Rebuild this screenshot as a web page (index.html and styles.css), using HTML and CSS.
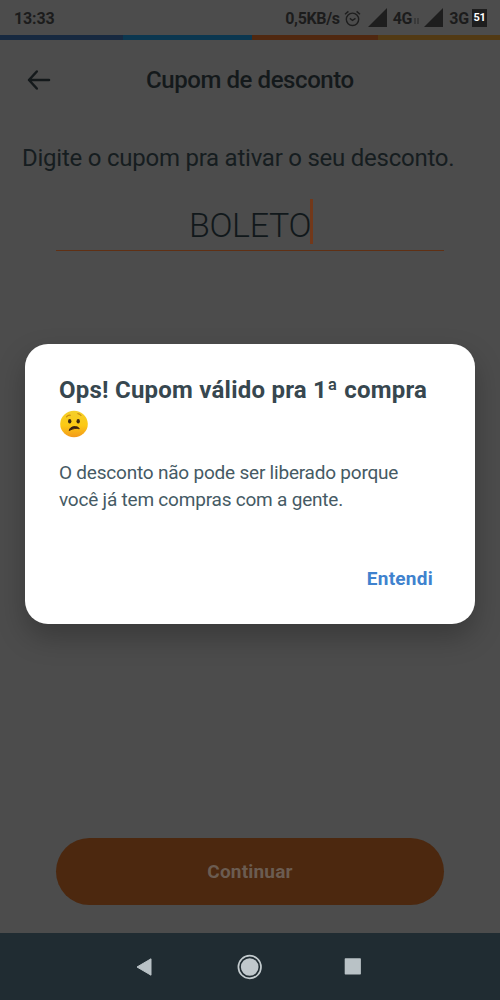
FILE: index.html
```html
<!DOCTYPE html>
<html lang="pt-BR">
<head>
<meta charset="utf-8">
<meta name="viewport" content="width=device-width, initial-scale=1">
<title>Cupom de desconto</title>
<link rel="stylesheet" href="styles.css">
</head>
<body>
<div class="screen">
  <div class="status">
    <span class="clock">13:33</span>
    <span class="speed">0,5KB/s</span>
    <svg class="alarm" width="17" height="17" viewBox="0 0 17 17" fill="none" stroke="#1e1e1e" stroke-width="1.4"><circle cx="8.5" cy="9.3" r="6.2"/><path d="M1 4.3 4.4 1.4M12.6 1.4 16 4.3M5.8 8.4l2.7 2 3-2"/></svg>
    <svg class="signal" width="19" height="19" viewBox="0 0 19 19"><path d="M0 19 19 0v19z" fill="#1e1e1e"/></svg>
    <span class="network">4G</span>
    <svg class="activity" width="6" height="6" viewBox="0 0 6 6"><path d="M1 0v6M4 0v6" stroke="#343434" stroke-width="1.4"/></svg>
    <svg class="signal" width="19" height="19" viewBox="0 0 19 19"><path d="M0 19 19 0v19z" fill="#1e1e1e"/></svg>
    <span class="network last">3G</span>
    <span class="battery">51</span>
  </div>
  <div class="stripe"><i class="navy"></i><i class="blue"></i><i class="orange"></i><i class="gold"></i></div>
  <header class="header">
    <svg class="back" width="24" height="22" viewBox="0 0 24 22" fill="none" stroke="#14191b" stroke-width="2.5" stroke-linecap="round" stroke-linejoin="round"><path d="M22 11H2M9.800 2.500 2 11l7.800 8.500"/></svg>
    <h1>Cupom de desconto</h1>
  </header>
  <main class="content">
    <p class="prompt">Digite o cupom pra ativar o seu desconto.</p>
    <div class="field"><span class="value">BOLETO</span><span class="caret"></span></div>
  </main>
  <div class="continue"><span>Continuar</span></div>
  <nav class="nav">
    <svg width="16" height="18" viewBox="0 0 16 18"><path d="M15 .8v16.400L1 9z" fill="#b9c2c6" stroke="#b9c2c6" stroke-linejoin="round"/></svg>
    <svg width="26" height="26" viewBox="0 0 26 26"><circle cx="12.700" cy="13" r="11.300" fill="none" stroke="#c4cccf" stroke-width="1.700"/><circle cx="12.700" cy="13" r="8.800" fill="#c0c8cc"/></svg>
    <svg width="17" height="17" viewBox="0 0 17 17"><rect x=".7" y=".3" width="16.200" height="16.200" rx=".7" fill="#b9c2c6"/></svg>
  </nav>
  <section class="dialog">
    <h2><span class="title">Ops! Cupom válido pra 1ª compra</span>
      <svg class="emoji" width="28" height="28" viewBox="0 0 28 28">
        <defs><linearGradient id="face" x1="0" y1="0" x2="0" y2="1"><stop offset="0" stop-color="#f5cf2b"/><stop offset=".55" stop-color="#fcc914"/><stop offset="1" stop-color="#f39a1c"/></linearGradient></defs>
        <ellipse cx="14" cy="14" rx="13.800" ry="13.200" fill="url(#face)"/>
        <path d="M6.500 6.800q1.500-1.900 4-1.600M17.800 3.600q2 .2 3.200 1.900" fill="none" stroke="#c98a12" stroke-width="1.100" stroke-linecap="round"/>
        <ellipse cx="9.700" cy="11.200" rx="1.700" ry="2.200" fill="#3a2611"/><ellipse cx="18.200" cy="11.200" rx="1.700" ry="2.200" fill="#3a2611"/>
        <path d="M9.200 20.500c.6-4.500 8.600-5.300 10.100-1.700-2.900-.9-5.900-.4-10.100 1.700z" fill="#3a2010" stroke="#3a2010" stroke-width=".9" stroke-linejoin="round"/>
      </svg>
    </h2>
    <p class="message">O desconto não pode ser liberado porque<br>você já tem compras com a gente.</p>
    <div class="action"><span>Entendi</span></div>
  </section>
</div>
</body>
</html>
```
FILE: styles.css
```css
* { box-sizing: border-box; }
body { margin: 0; font-family: Roboto, "Liberation Sans", sans-serif; }
h1, h2, p { margin: 0; }
svg { display: block; flex: none; }
span { white-space: nowrap; }
.screen { position: relative; width: 500px; height: 1000px; display: flex; flex-direction: column; background: #4c4c4c; overflow: hidden; }

.status { height: 35px; padding: 1px 13px 0 14px; display: flex; align-items: center; color: #1c1c1c; font-size: 16px; font-weight: 700; }
.clock { margin-right: auto; letter-spacing: -.15px; }
.speed { letter-spacing: -.35px; }
.alarm { margin: 0 7px 0 4px; }
.signal { margin-top: -2px; }
.network { margin-left: 6px; letter-spacing: -.2px; }
.activity { margin: 5px 4px 0 2px; }
.last { margin-right: 3px; }
.battery { width: 15px; height: 18px; background: #1e1e1e; color: #fff; font-size: 11px; line-height: 17px; text-align: center; letter-spacing: -.3px; }

.stripe { height: 5px; display: flex; }
.navy { width: 123px; background: #172940; }
.blue { width: 129px; background: #0b3750; }
.orange { width: 126px; background: #502810; }
.gold { flex: 1; background: #523a14; }

.header { height: 80px; display: flex; align-items: center; padding-left: 27px; }
.header h1 { margin-left: 95px; color: #14191b; font-size: 24px; font-weight: 500; line-height: 32px; letter-spacing: -.42px; }
.content { display: flex; flex-direction: column; padding: 20px 22px 0; }
.prompt { height: 36px; line-height: 36px; font-size: 24px; letter-spacing: -.24px; color: #161d20; white-space: nowrap; }
.field { margin: 22px 34px 0; height: 53px; border-bottom: 1px solid #603014; display: flex; justify-content: center; align-items: flex-start; }
.value { margin-left: 2px; font-size: 34px; font-weight: 300; line-height: 55px; letter-spacing: -.35px; color: #11181b; }
.caret { flex: none; margin: 1px 0 0 -1px; width: 3px; height: 45px; background: #72381a; }

.continue { margin: auto 56px 28px; height: 67px; border-radius: 34px; display: flex; align-items: center; justify-content: center; background: #4c280f; color: #6b5c51; font-size: 19px; font-weight: 700; letter-spacing: .2px; }
.nav { height: 67px; flex: none; background: #202c32; display: flex; align-items: center; padding-left: 136px; }
.nav svg + svg { margin-left: 85px; }
.nav svg + svg + svg { margin-left: 81px; }

.dialog { position: absolute; left: 25px; top: 344px; width: 450px; height: 280px; padding: 29px 42px 0 34px; border-radius: 23px; background: #fff; box-shadow: 0 13px 28px rgba(0, 0, 0, .25); }
.dialog h2 { color: #37474f; font-size: 24px; font-weight: 700; line-height: 34px; letter-spacing: .23px; }
.emoji { margin: 3px 0 0 1px; }
.message { margin-top: 21px; color: #455a64; font-size: 19px; line-height: 27px; letter-spacing: -.21px; white-space: nowrap; }
.action { margin-top: 51px; display: flex; justify-content: flex-end; color: #3f82ce; font-size: 19px; font-weight: 700; line-height: 30px; letter-spacing: .25px; }
```
